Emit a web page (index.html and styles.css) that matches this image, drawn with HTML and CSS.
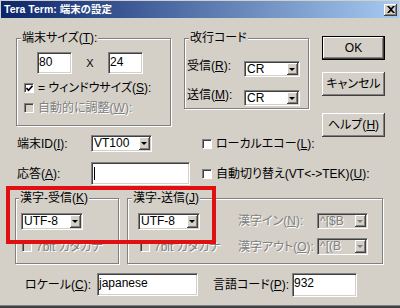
FILE: index.html
```html
<!DOCTYPE html>
<html lang="ja">
<head>
<meta charset="utf-8">
<title>Tera Term: 端末の設定</title>
<link rel="stylesheet" href="styles.css">
</head>
<body>
<div class="window">
  <div class="titlebar">
    <span class="title">Tera Term: 端末の設定</span>
    <span class="close"><svg width="8" height="7" viewBox="0 0 8 7"><path d="M0 0h2l2 2 2-2h2L5 3.5 8 7H6L4 5 2 7H0l3-3.5z" fill="#000"/></svg></span>
  </div>
  <div class="content">
    <div class="top">
      <div class="groups">
        <div class="group g-size">
          <div class="legend">端末サイズ(<u>T</u>):</div>
          <div class="size-row">
            <div class="edit w-size">80</div>
            <span class="times">X</span>
            <div class="edit w-size">24</div>
          </div>
          <div class="check-row cr1"><span class="cb"><svg width="7" height="7" viewBox="0 0 7 7"><path d="M0.5 3 L2.5 5.2 L6.5 0.8" fill="none" stroke="#000" stroke-width="1.6"/></svg></span><span>= ウィンドウサイズ(<u>S</u>):</span></div>
          <div class="check-row cr2 disabled"><span class="cb off"></span><span>自動的に調整(<u>W</u>):</span></div>
        </div>
        <div class="group g-nl">
          <div class="legend">改行コード</div>
          <div class="field-row nl1"><span class="lbl up w-nl">受信(<u>R</u>):</span><div class="combo w-cr"><span class="val">CR</span><span class="drop"><i class="arrow"></i></span></div></div>
          <div class="field-row nl2"><span class="lbl up w-nl">送信(<u>M</u>):</span><div class="combo w-cr"><span class="val">CR</span><span class="drop"><i class="arrow"></i></span></div></div>
        </div>
      </div>
      <div class="buttons">
        <div class="btn default">OK</div>
        <div class="btn b2">キャンセル</div>
        <div class="btn b3">ヘルプ(<u>H</u>)</div>
      </div>
      <div class="row row-id">
        <span class="lbl w-id">端末ID(<u>I</u>):</span>
        <div class="combo w-vt"><span class="val">VT100</span><span class="drop"><i class="arrow"></i></span></div>
        <div class="check-row cr-echo"><span class="cb"></span><span>ローカルエコー(<u>L</u>):</span></div>
      </div>
    </div>
    <div class="row row-answer">
      <span class="lbl w-id">応答(<u>A</u>):</span>
      <div class="edit w-answer"><span class="caret"></span></div>
      <div class="check-row cr-auto"><span class="cb"></span><span>自動切り替え(VT&lt;-&gt;TEK)(<u>U</u>):</span></div>
    </div>
    <div class="kanji">
      <div class="group g-k1">
        <div class="legend">漢字-受信(<u>K</u>)</div>
        <div class="combo w-utf k1-combo"><span class="val">UTF-8</span><span class="drop"><i class="arrow"></i></span></div>
        <div class="check-row cr-7bit disabled"><span class="cb off"></span><span>7bit カタカナ</span></div>
      </div>
      <div class="group g-k2">
        <div class="legend">漢字-送信(<u>J</u>)</div>
        <div class="k2-inner">
          <div class="k2-left">
            <div class="combo w-utf"><span class="val">UTF-8</span><span class="drop"><i class="arrow"></i></span></div>
            <div class="check-row cr-7bit2 disabled"><span class="cb off"></span><span>7bit カタカナ</span></div>
          </div>
          <div class="k2-right">
            <div class="field-row kin"><span class="lbl w-kin disabled">漢字イン(<u>N</u>):</span><div class="combo w-esc dis"><span class="val">^[$B</span><span class="drop"><i class="arrow"></i></span></div></div>
            <div class="field-row kout"><span class="lbl w-kin disabled">漢字アウト(<u>O</u>):</span><div class="combo w-esc dis"><span class="val">^[(B</span><span class="drop"><i class="arrow"></i></span></div></div>
          </div>
        </div>
      </div>
    </div>
    <div class="row row-locale">
      <span class="lbl w-loc">ロケール(<u>C</u>):</span>
      <div class="edit w-loc-in">japanese</div>
      <span class="lbl w-lang">言語コード(<u>P</u>):</span>
      <div class="edit w-lang-in">932</div>
    </div>
  </div>
  <div class="highlight"></div>
</div>
</body>
</html>
```

FILE: styles.css
```css
* { box-sizing: border-box; }
html, body { margin: 0; padding: 0; }
body { width: 400px; height: 308px; overflow: hidden; background: #d4d0c8; }

.window {
  position: relative;
  width: 400px;
  height: 308px;
  background: #d4d0c8;
  font: 12px/14px "Liberation Sans", "Noto Sans CJK JP", sans-serif;
  font-feature-settings: "palt";
  color: #000;
  border-bottom: 3px solid #404040;
  box-shadow: inset 0 -1px #808080;
}
u { text-decoration: underline; text-underline-offset: 1px; }

.titlebar {
  display: flex;
  align-items: center;
  justify-content: space-between;
  height: 17px;
  margin: 1px 1px 0 1px;
  padding: 0 2px 0 3px;
  background: linear-gradient(to right, #0a246a, #a6caf0);
}
.title { color: #fff; font-weight: bold; font-size: 10.5px; line-height: 17px; }
.close {
  display: flex; align-items: center; justify-content: center;
  width: 13px; height: 12px;
  background: #d4d0c8;
  box-shadow: inset -1px -1px #404040, inset 1px 1px #fff, inset -2px -2px #808080;
}

.content { padding-left: 15px; }

.top { display: grid; grid-template-columns: 307px 63px; }
.groups { grid-column: 1; grid-row: 1; display: flex; align-items: flex-start; padding-top: 20px; }
.buttons { grid-column: 2; grid-row: 1 / 3; padding-top: 18px; }
.row-id { grid-column: 1; grid-row: 2; }

.group {
  border: 1px solid #808080;
  box-shadow: inset 1px 1px #fff, 1px 1px #fff;
}
.legend {
  width: fit-content;
  margin-top: -8px;
  margin-left: 4px;
  padding: 0 1px;
  background: #d4d0c8;
  line-height: 14px;
}

.g-size { margin-left: 1px; width: 155px; height: 88px; }
.size-row { display: flex; align-items: center; margin: 7px 0 0 20px; }
.times { width: 36px; text-align: center; font-size: 11px; }
.w-size { width: 35px; height: 22px; }

.check-row { display: flex; align-items: center; height: 14px; white-space: nowrap; }
.cr1 { margin: 7px 0 0 7px; }
.cr2 { margin: 6px 0 0 7px; }
.cb {
  display: flex; align-items: center; justify-content: center;
  width: 10px; height: 10px; margin-right: 4px; flex: none;
  background: #fff;
  border: 1px solid; border-color: #808080 #fff #fff #808080;
  box-shadow: inset 1px 1px #404040;
}
.cb svg { margin: 1px 0 0 1px; }
.cb.off { background: #d4d0c8; }
.disabled { color: #808080; text-shadow: 1px 1px #fff; }

.g-nl { margin-left: 13px; width: 125px; height: 71px; }
.field-row { display: flex; align-items: center; }
.g-nl .field-row { margin-left: 2px; }
.nl1 { margin-top: 14px; }
.nl2 { margin-top: 9px; }
.lbl { white-space: nowrap; flex: none; }
.lbl.up { margin-bottom: 6px; }
.w-nl { width: 57px; }

.combo {
  display: flex; flex: none;
  height: 16px;
  background: #fff;
  border: 1px solid; border-color: #808080 #fff #fff #808080;
  box-shadow: inset 1px 1px #404040, inset -1px -1px #d4d0c8;
  padding: 1px;
}
.combo .val { flex: 1; padding-left: 1px; line-height: 12px; white-space: nowrap; overflow: hidden; }
.drop {
  display: flex; align-items: center; justify-content: center;
  width: 11px; flex: none;
  background: #d4d0c8;
  box-shadow: inset -1px -1px #404040, inset 1px 1px #fff, inset -2px -2px #808080;
}
.arrow {
  width: 0; height: 0;
  border-left: 3px solid transparent; border-right: 3px solid transparent;
  border-top: 3px solid #000;
  margin: 0 1px 0 0;
}
.combo.dis { background: #d4d0c8; }
.combo.dis .val { color: #808080; text-shadow: 1px 1px #fff; }
.combo.dis .arrow { border-top-color: #808080; }
.w-cr { width: 56px; }

.edit {
  display: flex; align-items: flex-start; flex: none;
  background: #fff;
  border: 1px solid; border-color: #808080 #fff #fff #808080;
  box-shadow: inset 1px 1px #404040, inset -1px -1px #d4d0c8;
  padding: 2px 0 0 1px;
  white-space: nowrap;
}

.btn {
  display: flex; align-items: center; justify-content: center;
  width: 63px; height: 24px;
  background: #d4d0c8;
  box-shadow: inset -1px -1px #404040, inset 1px 1px #fff, inset -2px -2px #808080;
  white-space: nowrap;
}
.btn.default { border: 1px solid #000; box-shadow: inset -1px -1px #404040, inset 1px 1px #fff, inset -2px -2px #808080; }
.b2 { margin-top: 12px; }
.b3 { margin-top: 17px; }

.row { display: flex; align-items: center; }
.row-id { margin: 9px 0 0 2px; height: 17px; }
.w-id { width: 74px; }
.w-vt { width: 61px; height: 17px; }
.cr-echo { margin-left: 50px; }

.row-answer { margin: 10px 0 0 2px; height: 23px; }
.w-answer { width: 99px; height: 23px; padding: 4px 0 0 2px; }
.caret { width: 1px; height: 13px; background: #000; }
.cr-auto { margin-left: 12px; }

.kanji { display: flex; align-items: flex-start; margin-top: 13px; }
.g-k1 { width: 104px; height: 66px; }
.g-k1 .legend { margin-left: 3px; }
.w-utf { width: 62px; height: 17px; }
.k1-combo { margin: 8px 0 0 5px; }
.cr-7bit { margin: 10px 0 0 6px; }
.g-k2 { margin-left: 8px; width: 256px; height: 66px; }
.k2-inner { display: flex; margin-top: 8px; }
.k2-left { margin-left: 10px; width: 100px; }
.cr-7bit2 { margin: 10px 0 0 2px; }
.w-kin { width: 79px; }
.w-esc { width: 51px; }
.kin .combo { height: 16px; }
.kout { margin-top: 9px; }
.kout .combo { height: 17px; }

.row-locale { margin: 9px 0 0 10px; height: 23px; }
.w-loc { width: 72px; }
.w-loc-in { width: 101px; height: 23px; }
.w-lang { width: 79px; margin-left: 15px; }
.w-lang-in { width: 65px; height: 24px; }

.highlight {
  position: absolute;
  left: 6px; top: 185px;
  width: 210px; height: 58px;
  border: 4px solid #e01010;
}
```
